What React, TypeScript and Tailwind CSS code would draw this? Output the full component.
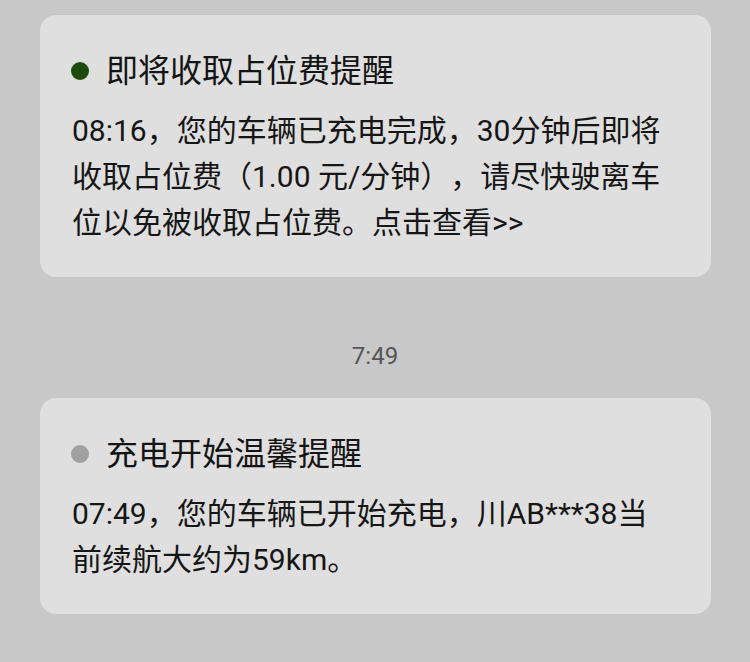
const cards = [
  {
    id: "fee",
    title: "即将收取占位费提醒",
    dot: "bg-[#1e4a0b]",
    lines: [
      "08:16，您的车辆已充电完成，30分钟后即将",
      "收取占位费（1.00 元/分钟），请尽快驶离车",
      "位以免被收取占位费。点击查看>>",
    ],
  },
  {
    id: "start",
    title: "充电开始温馨提醒",
    dot: "bg-[#a0a0a0]",
    lines: ["07:49，您的车辆已开始充电，川AB***38当", "前续航大约为59km。"],
  },
];

function NoticeCard({ card }: { card: (typeof cards)[number] }) {
  return (
    <div className="ml-[40px] w-[671px] rounded-[16px] bg-[#dfdfdf] px-[32px] pt-[33px] pb-[31px]">
      <div className="flex h-[46px] items-center gap-x-[17px]">
        <span className={`-ml-px h-[18px] w-[18px] shrink-0 rounded-full ${card.dot}`} />
        <h3 className="text-[32px] leading-[46px] font-normal text-[#141414]">
          {card.title}
        </h3>
      </div>
      <div className="mt-[14px] text-[30px] leading-[46px] text-[#161616] [text-spacing-trim:space-all]">
        {card.lines.map((line) => (
          <p key={line} className="whitespace-nowrap">
            {line}
          </p>
        ))}
      </div>
    </div>
  );
}

export default function App() {
  return (
    <div className="min-h-[662px] bg-[#c8c8c8] pt-[15px] font-['Roboto','Noto_Sans_CJK_SC',sans-serif]">
      <NoticeCard card={cards[0]} />
      <p className="mt-[64px] mb-[27px] text-center text-[24px] leading-[30px] text-[#555555]">
        7:49
      </p>
      <NoticeCard card={cards[1]} />
    </div>
  );
}
